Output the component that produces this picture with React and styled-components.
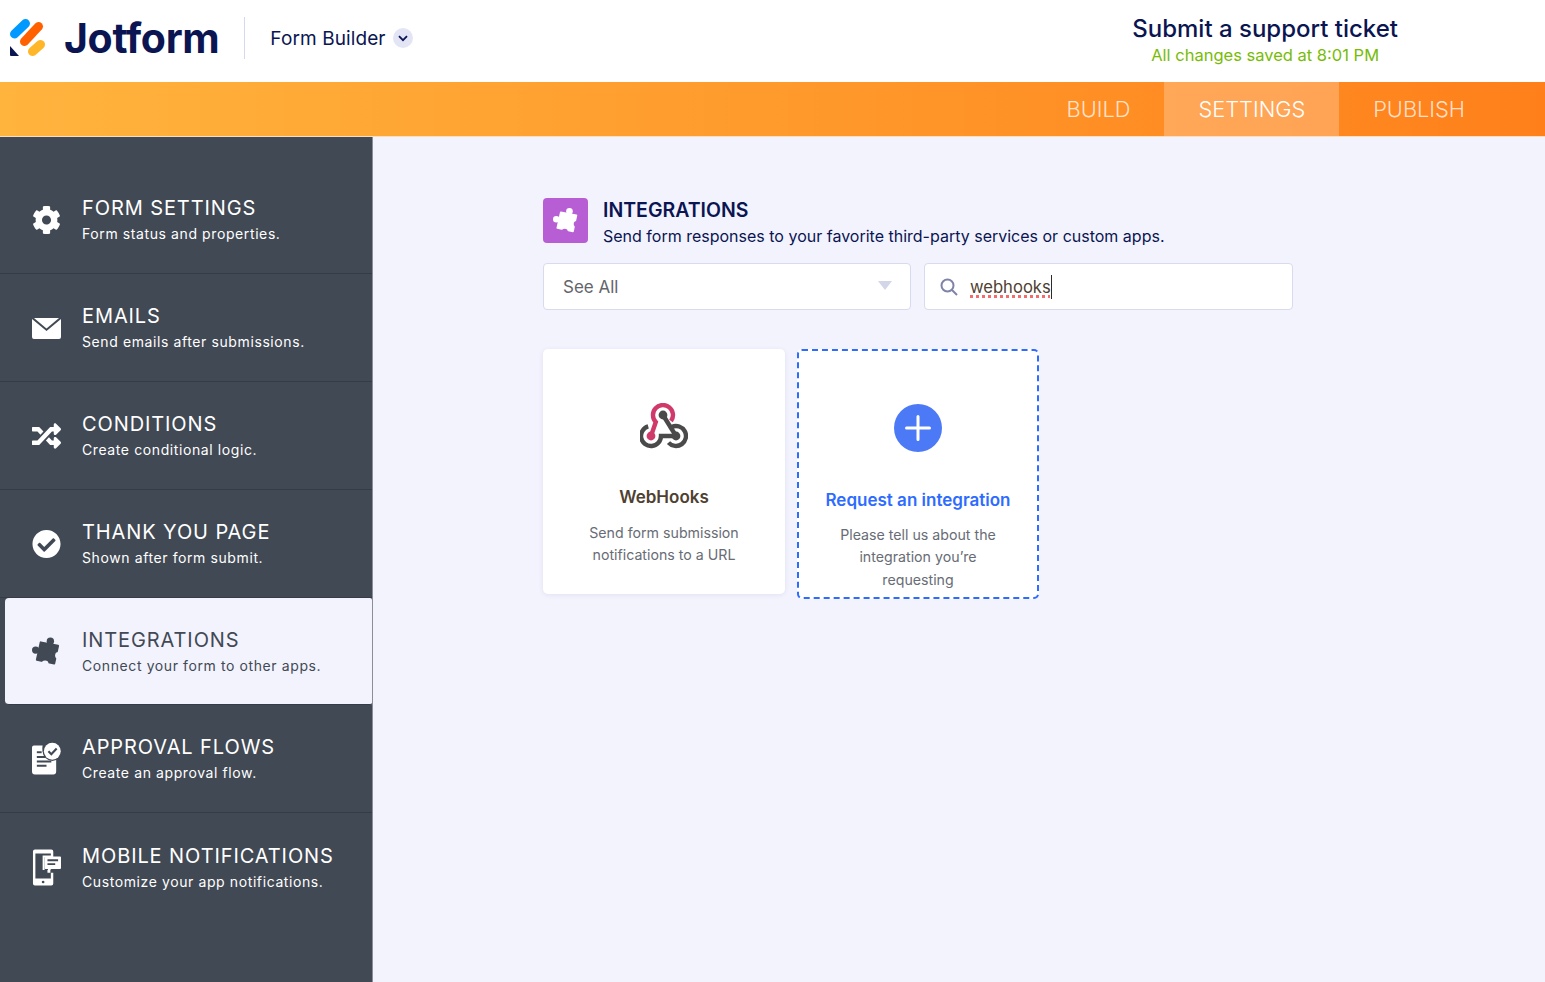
import styled, { createGlobalStyle } from 'styled-components';
import { FaCog, FaRandom, FaCheckCircle } from 'react-icons/fa';

const GlobalStyle = createGlobalStyle`
  html, body { margin: 0; padding: 0; background: #F3F3FE; }
  * { box-sizing: border-box; }
  body { font-family: "Inter", "Liberation Sans", sans-serif; }
`;

const Page = styled.div`
  width: 1545px;
  height: 982px;
  overflow: hidden;
  display: flex;
  flex-direction: column;
`;

const Header = styled.header`
  height: 82px;
  flex: none;
  background: #fff;
  display: flex;
  align-items: center;
  justify-content: space-between;
  padding: 0 147px 6px 10px;
`;

const Brand = styled.div`
  display: flex;
  align-items: center;
`;

const LogoWord = styled.span`
  margin-left: 18px;
  font-family: "Inter", sans-serif;
  font-size: 41px;
  font-weight: 700;
  letter-spacing: -0.35px;
  color: #0A1551;
  line-height: 42px;
`;

const Divider = styled.div`
  width: 1px;
  height: 42px;
  margin: 0 25px;
  background: #D5D9EE;
`;

const BuilderName = styled.span`
  font-size: 19px;
  letter-spacing: 0.1px;
  color: #0A1551;
`;

const Chevron = styled.span`
  width: 20px;
  height: 20px;
  margin-left: 7px;
  border-radius: 50%;
  background: #E3E5F5;
  display: flex;
  align-items: center;
  justify-content: center;
`;

const Support = styled.div`
  text-align: center;
  padding-top: 3px;
`;

const SupportTitle = styled.div`
  font-size: 24px;
  font-weight: 500;
  line-height: 30px;
  color: #0A1551;
`;

const SavedNote = styled.div`
  font-size: 16.5px;
  line-height: 22px;
  color: #78BB07;
`;

const NavBar = styled.nav`
  height: 55px;
  flex: none;
  display: flex;
  justify-content: flex-end;
  padding-right: 46px;
  background: linear-gradient(90deg, #FFB43E 0%, #FF801B 100%);
  border-bottom: 1px solid #FBDDBD;
`;

const NavTab = styled.div`
  height: 54px;
  padding: 0 34px;
  display: flex;
  align-items: center;
  font-size: 21.8px;
  font-weight: 300;
  color: ${props => (props.$active ? '#fff' : 'rgba(255,255,255,0.75)')};
  background: ${props => (props.$active ? 'rgba(255,255,255,0.24)' : 'transparent')};
`;

const Body = styled.div`
  flex: 1;
  display: flex;
  min-height: 0;
`;

const Sidebar = styled.aside`
  width: 373px;
  flex: none;
  background: #414954;
  border-right: 1px solid #8A8F97;
  padding-top: 29px;
`;

const SideItem = styled.div`
  height: ${props => (props.$active ? '107px' : '108px')};
  display: flex;
  align-items: center;
  padding: 1px 0 0 ${props => (props.$active ? '27px' : '32px')};
  gap: 21px;
  color: ${props => (props.$active ? '#414954' : '#fff')};
  background: ${props => (props.$active ? '#F3F3FE' : 'transparent')};
  border-bottom: 1px solid #353C46;
  margin-left: ${props => (props.$active ? '5px' : '0')};
  border-radius: ${props => (props.$active ? '4px 2px 2px 4px' : '0')};
  &:last-child { border-bottom: 0; }
`;

const SideIcon = styled.span`
  width: 29px;
  height: 34px;
  flex: none;
  display: flex;
  align-items: center;
  justify-content: center;
`;

const SideTitle = styled.div`
  font-size: 20px;
  line-height: 24px;
  letter-spacing: 0.9px;
  font-weight: 400;
  white-space: nowrap;
`;

const SideText = styled.div`
  margin-top: 4px;
  font-size: 14px;
  line-height: 20px;
  letter-spacing: 0.6px;
  white-space: nowrap;
`;

const Main = styled.main`
  flex: 1;
  padding: 61px 0 0 170px;
`;

const Intro = styled.div`
  display: flex;
  gap: 15px;
  align-items: flex-start;
`;

const IntroIcon = styled.div`
  width: 45px;
  height: 45px;
  border-radius: 4px;
  background: #B75ED5;
  color: #fff;
  display: flex;
  align-items: center;
  justify-content: center;
`;

const IntroTitle = styled.h1`
  margin: 0 0 2px;
  font-size: 19.5px;
  line-height: 24px;
  font-weight: 600;
  color: #0A1551;
`;

const IntroText = styled.p`
  margin: 0;
  font-size: 16px;
  line-height: 24px;
  color: #0A1551;
`;

const Filters = styled.div`
  display: flex;
  gap: 13px;
  margin-top: 15px;
`;

const Field = styled.div`
  width: ${props => props.$width}px;
  height: 47px;
  background: #fff;
  border: 1px solid #D8DAED;
  border-radius: 4px;
  display: flex;
  align-items: center;
  padding: 0 18px 0 19px;
  font-size: 17px;
  color: #63656C;
`;

const Caret = styled.span`
  margin-left: auto;
  width: 0;
  height: 0;
  border-left: 7px solid transparent;
  border-right: 7px solid transparent;
  border-top: 9px solid #D3D5E9;
  margin-top: -2px;
`;

const SearchField = styled(Field)`
  padding-left: 15px;
  gap: 12px;
`;

const Typed = styled.span`
  font-size: 16.6px;
  color: #4F4131;
  line-height: 24px;
  border-right: 1px solid #2b2b2b;
  text-decoration: underline dotted #F56A6A 2.5px;
  text-underline-offset: 2px;
`;

const Cards = styled.div`
  display: flex;
  align-items: flex-start;
  gap: 12px;
  margin-top: 39px;
`;

const Card = styled.div`
  width: 242px;
  height: 245px;
  background: #fff;
  border-radius: 5px;
  box-shadow: 0 1px 5px rgba(80, 80, 130, 0.1);
  display: flex;
  flex-direction: column;
  align-items: center;
  padding-top: 54px;
  text-align: center;
`;

const RequestCard = styled(Card)`
  height: 250px;
  border: 2px dashed #2E6BFF;
  box-shadow: none;
  padding-top: 53px;
`;

const PlusCircle = styled.div`
  width: 48px;
  height: 48px;
  border-radius: 50%;
  background: #4C79F6;
  display: flex;
  align-items: center;
  justify-content: center;
`;

const CardTitle = styled.div`
  margin-top: ${props => props.$top}px;
  font-size: 17px;
  line-height: 24px;
  font-weight: 600;
  color: ${props => props.$color};
`;

const CardText = styled.div`
  margin-top: ${props => props.$top}px;
  width: ${props => props.$width}px;
  font-size: 14.2px;
  line-height: 22.3px;
  color: #686C75;
`;

const LogoMark = () => (
  <svg width="36" height="38" viewBox="0 0 36 38">
    <line x1="4.5" y1="15" x2="15.5" y2="4.5" stroke="#0099FF" strokeWidth="9" strokeLinecap="round" />
    <line x1="14.5" y1="22.5" x2="28.5" y2="7.5" stroke="#FF6100" strokeWidth="9" strokeLinecap="round" />
    <line x1="22.5" y1="32.5" x2="30.5" y2="25.5" stroke="#FFB629" strokeWidth="9" strokeLinecap="round" />
    <path d="M0 27 L9 37 H1 Q0 37 0 36 Z" fill="#0A1551" />
  </svg>
);

// tilted piece: knobs on top and left, notches cut on right and bottom
const PuzzleIcon = ({ size, hole }) => (
  <svg width={size} height={size} viewBox="0 0 30 30" fill="currentColor">
    <polygon points="9,5 27,8.5 23,27 5,23" stroke="currentColor" strokeWidth="2" strokeLinejoin="round" />
    <circle cx="19" cy="3.8" r="3.8" />
    <circle cx="3.8" cy="13" r="3.8" />
    <circle cx="27.5" cy="18.5" r="3.6" fill={hole} />
    <circle cx="13.5" cy="27.5" r="3.6" fill={hole} />
  </svg>
);

const Envelope = () => (
  <svg width="29" height="21" viewBox="0 0 29 21">
    <path d="M0 1 L14.5 13 L29 1 V19 Q29 21 27 21 H2 Q0 21 0 19 Z" fill="currentColor" />
    <path d="M2 0 H27 L14.5 10.5 Z" fill="currentColor" />
  </svg>
);

const ApprovalIcon = () => (
  <svg width="30" height="34" viewBox="0 0 30 34">
    <path d="M2 3 H11 Q10 8 12 11 Q16 17 25 16 V30 Q25 33 22 33 H3 Q0 33 0 30 V5 Q0 3 2 3 Z" fill="currentColor" />
    <path d="M5 15 H14 M5 19.5 H20 M5 24 H15" stroke="#414954" strokeWidth="2" fill="none" />
    <path d="M5 10 H10" stroke="#414954" strokeWidth="2" fill="none" />
    <circle cx="21" cy="9" r="10" fill="#414954" />
    <circle cx="21" cy="9" r="8.7" fill="currentColor" />
    <path d="M17 9 L20 12 L25.5 6.2" stroke="#414954" strokeWidth="2.2" fill="none" />
  </svg>
);

const MobileIcon = () => (
  <svg width="30" height="39" viewBox="0 0 30 39">
    <path d="M3 1 H20 Q22 1 22 3 V9 H13 V22 H19 V25 H22 V36 Q22 38 20 38 H3 Q1 38 1 36 V3 Q1 1 3 1 Z M3.5 5 V31 H19.5 V25 H16 V22 H11 V7 H19.5 V5 Z" fill="currentColor" fillRule="evenodd" />
    <circle cx="11.5" cy="34.5" r="1.4" fill="#414954" />
    <path d="M14 8 H29 Q30 8 30 9 V20 Q30 21 29 21 H20 L16.5 24 V21 H14 Q13 21 13 20 V9 Q13 8 14 8 Z" fill="currentColor" />
    <path d="M16 12 H27 M16 16 H24" stroke="#414954" strokeWidth="2" />
  </svg>
);

const WebhookIcon = () => (
  <svg width="48" height="48" viewBox="0 0 48 48" fill="none" strokeWidth="4.4">
    <path d="M8.2 23.4 A10 10 0 1 0 21 33 H36" stroke="#4A4A4A" />
    <path d="M32 23.8 A10 10 0 1 1 28.5 39.6" stroke="#4A4A4A" />
    <path d="M23 12 L36 33" stroke="#4A4A4A" />
    <path d="M17 20.5 L11 33" stroke="#fff" strokeWidth="8" />
    <path d="M31 18 A10 10 0 1 0 15.8 19 L11 33" stroke="#CF3A6A" />
    <circle cx="23" cy="12" r="4.4" fill="#4A4A4A" />
    <circle cx="36" cy="33" r="4.4" fill="#4A4A4A" />
    <circle cx="11" cy="33" r="4.4" fill="#CF3A6A" />
  </svg>
);

const sideItems = [
  { title: 'FORM SETTINGS', text: 'Form status and properties.', icon: <FaCog size={30} /> },
  { title: 'EMAILS', text: 'Send emails after submissions.', icon: <Envelope /> },
  { title: 'CONDITIONS', text: 'Create conditional logic.', icon: <FaRandom size={30} /> },
  { title: 'THANK YOU PAGE', text: 'Shown after form submit.', icon: <FaCheckCircle size={30} /> },
  { title: 'INTEGRATIONS', text: 'Connect your form to other apps.', icon: <PuzzleIcon size={30} hole="#F3F3FE" />, active: true },
  { title: 'APPROVAL FLOWS', text: 'Create an approval flow.', icon: <ApprovalIcon /> },
  { title: 'MOBILE NOTIFICATIONS', text: 'Customize your app notifications.', icon: <MobileIcon /> },
];

const App = () => {
  return (
    <Page>
      <GlobalStyle />
      <Header>
        <Brand>
          <LogoMark />
          <LogoWord>Jotform</LogoWord>
          <Divider />
          <BuilderName>Form Builder</BuilderName>
          <Chevron>
            <svg width="10" height="7" viewBox="0 0 10 7" fill="none">
              <path d="M1 1.2 L5 5.2 L9 1.2" stroke="#0A1551" strokeWidth="1.8" />
            </svg>
          </Chevron>
        </Brand>
        <Support>
          <SupportTitle>Submit a support ticket</SupportTitle>
          <SavedNote>All changes saved at 8:01 PM</SavedNote>
        </Support>
      </Header>
      <NavBar>
        <NavTab>BUILD</NavTab>
        <NavTab $active>SETTINGS</NavTab>
        <NavTab>PUBLISH</NavTab>
      </NavBar>
      <Body>
        <Sidebar>
          {sideItems.map(item => (
            <SideItem key={item.title} $active={item.active}>
              <SideIcon>{item.icon}</SideIcon>
              <div>
                <SideTitle>{item.title}</SideTitle>
                <SideText>{item.text}</SideText>
              </div>
            </SideItem>
          ))}
        </Sidebar>
        <Main>
          <Intro>
            <IntroIcon>
              <PuzzleIcon size={26} hole="#B75ED5" />
            </IntroIcon>
            <div>
              <IntroTitle>INTEGRATIONS</IntroTitle>
              <IntroText>Send form responses to your favorite third-party services or custom apps.</IntroText>
            </div>
          </Intro>
          <Filters>
            <Field $width={368}>
              See All
              <Caret />
            </Field>
            <SearchField $width={369}>
              <svg width="18" height="18" viewBox="0 0 18 18" fill="none" stroke="#7F83A8" strokeWidth="2">
                <circle cx="7.5" cy="7.5" r="6" />
                <path d="M12 12 L17 17" />
              </svg>
              <Typed>webhooks</Typed>
            </SearchField>
          </Filters>
          <Cards>
            <Card>
              <WebhookIcon />
              <CardTitle $top={34} $color="#4F4131">WebHooks</CardTitle>
              <CardText $top={13} $width={200}>Send form submission notifications to a URL</CardText>
            </Card>
            <RequestCard>
              <PlusCircle>
                <svg width="26" height="26" viewBox="0 0 26 26" stroke="#fff" strokeWidth="3" strokeLinecap="round">
                  <path d="M13 1.5 V24.5 M1.5 13 H24.5" />
                </svg>
              </PlusCircle>
              <CardTitle $top={36} $color="#2E6BFF">Request an integration</CardTitle>
              <CardText $top={12} $width={170}>Please tell us about the integration you’re requesting</CardText>
            </RequestCard>
          </Cards>
        </Main>
      </Body>
    </Page>
  );
};

export default App;
